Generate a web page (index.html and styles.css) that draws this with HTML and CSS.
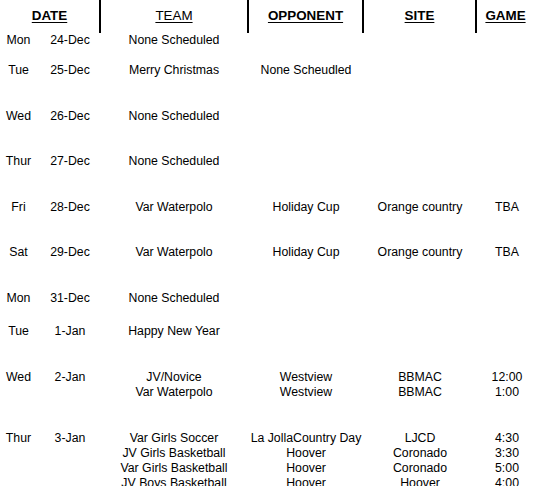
FILE: index.html
```html
<!DOCTYPE html>
<html>
<head>
<meta charset="utf-8">
<link rel="stylesheet" href="styles.css">
</head>
<body>
<div class="sheet">
  <div class="head">
    <div class="hcell"><span class="bold">DATE</span></div>
    <div class="hcell"><span>TEAM</span></div>
    <div class="hcell"><span class="bold">OPPONENT</span></div>
    <div class="hcell"><span class="bold">SITE</span></div>
    <div class="hcell"><span class="bold">GAME</span></div>
  </div>

  <div class="row r-tight">
    <div class="c day">Mon</div><div class="c date">24-Dec</div>
    <div class="c team">None Scheduled</div><div class="c opp"></div><div class="c site"></div><div class="c game"></div>
  </div>
  <div class="row">
    <div class="c day">Tue</div><div class="c date">25-Dec</div>
    <div class="c team">Merry Christmas</div><div class="c opp">None Scheudled</div><div class="c site"></div><div class="c game"></div>
  </div>
  <div class="row">
    <div class="c day">Wed</div><div class="c date">26-Dec</div>
    <div class="c team">None Scheduled</div><div class="c opp"></div><div class="c site"></div><div class="c game"></div>
  </div>
  <div class="row">
    <div class="c day">Thur</div><div class="c date">27-Dec</div>
    <div class="c team">None Scheduled</div><div class="c opp"></div><div class="c site"></div><div class="c game"></div>
  </div>
  <div class="row">
    <div class="c day">Fri</div><div class="c date">28-Dec</div>
    <div class="c team">Var Waterpolo</div><div class="c opp">Holiday Cup</div><div class="c site">Orange country</div><div class="c game">TBA</div>
  </div>
  <div class="row">
    <div class="c day">Sat</div><div class="c date">29-Dec</div>
    <div class="c team">Var Waterpolo</div><div class="c opp">Holiday Cup</div><div class="c site">Orange country</div><div class="c game">TBA</div>
  </div>
  <div class="row r-mid">
    <div class="c day">Mon</div><div class="c date">31-Dec</div>
    <div class="c team">None Scheduled</div><div class="c opp"></div><div class="c site"></div><div class="c game"></div>
  </div>
  <div class="row">
    <div class="c day">Tue</div><div class="c date">1-Jan</div>
    <div class="c team">Happy New Year</div><div class="c opp"></div><div class="c site"></div><div class="c game"></div>
  </div>
  <div class="row r-wide">
    <div class="c day">Wed</div><div class="c date">2-Jan</div>
    <div class="c team">JV/Novice<br>Var Waterpolo</div>
    <div class="c opp">Westview<br>Westview</div>
    <div class="c site">BBMAC<br>BBMAC</div>
    <div class="c game">12:00<br>1:00</div>
  </div>
  <div class="row">
    <div class="c day">Thur</div><div class="c date">3-Jan</div>
    <div class="c team">Var Girls Soccer<br>JV Girls Basketball<br>Var Girls Basketball<br>JV Boys Basketball</div>
    <div class="c opp">La JollaCountry Day<br>Hoover<br>Hoover<br>Hoover</div>
    <div class="c site">LJCD<br>Coronado<br>Coronado<br>Hoover</div>
    <div class="c game">4:30<br>3:30<br>5:00<br>4:00</div>
  </div>
</div>
</body>
</html>
```

FILE: styles.css
```css
html, body {
  margin: 0;
  padding: 0;
  background: #fff;
  overflow: hidden;
}

body {
  width: 534px;
  height: 486px;
  color: #000;
  font-family: "Liberation Sans", Arial, sans-serif;
}

.sheet {
  display: flex;
  flex-direction: column;
  height: 486px;
  overflow: hidden;
}

.head {
  display: grid;
  grid-template-columns: 99px 148px 115px 113px 59px;
  height: 33px;
  flex: none;
}

.hcell {
  display: flex;
  justify-content: center;
  padding-top: 8px;
  font-size: 13.4px;
  line-height: 15px;
}

.hcell + .hcell {
  border-left: 2px solid #000;
}

.hcell span {
  text-decoration: underline;
  text-decoration-thickness: 1px;
  text-underline-offset: 2px;
}

.hcell .bold {
  font-weight: bold;
}

.row {
  display: grid;
  grid-template-columns: 37px 66px 142px 122px 106px 68px;
  font-size: 12.3px;
  line-height: 15px;
  padding-bottom: 30.5px;
  flex: none;
}

.row.r-tight {
  padding-bottom: 15px;
}

.row.r-mid {
  padding-bottom: 18.5px;
}

.row.r-wide {
  padding-bottom: 31.5px;
}

.c {
  text-align: center;
  white-space: nowrap;
}
```
